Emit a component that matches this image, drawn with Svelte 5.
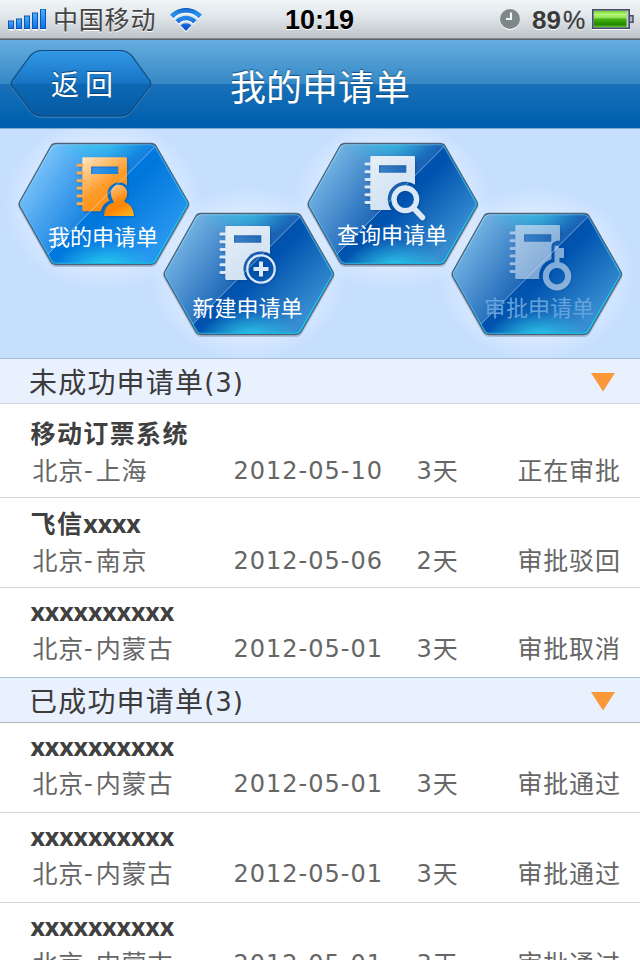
<script>
  const tabs = [
    { label: '我的申请单', kind: 'person', tx: 30, ty: 103, bx: 64.3, by: 15.3, active: true },
    { label: '新建申请单', kind: 'plus', tx: 29.5, ty: 104, bx: 62.3, by: 14 },
    { label: '查询申请单', kind: 'search', tx: 30, ty: 101, bx: 63.3, by: 14 },
    { label: '审批申请单', kind: 'key', tx: 33, ty: 104, bx: 64.3, by: 13, dim: true }
  ];
  const rings = [8, 15.7, 23.4, 31, 38.7, 46.4];

  const groups = [
    {
      title: '未成功申请单(3)',
      rows: [
        { name: '移动订票系统', route: '北京-上海', date: '2012-05-10', days: '3天', state: '正在审批' },
        { name: '飞信xxxx', route: '北京-南京', date: '2012-05-06', days: '2天', state: '审批驳回' },
        { name: 'xxxxxxxxxx', route: '北京-内蒙古', date: '2012-05-01', days: '3天', state: '审批取消' }
      ]
    },
    {
      title: '已成功申请单(3)',
      rows: [1, 2, 3].map(() => ({
        name: 'xxxxxxxxxx', route: '北京-内蒙古', date: '2012-05-01', days: '3天', state: '审批通过'
      }))
    }
  ];

  // Latin and Chinese runs are tracked differently
  const runs = (s) => s.match(/[\x20-\x7e]+|[^\x20-\x7e]+/g);
  const isLatin = (s) => /^[\x20-\x7e]/.test(s);
  const hex = 'M38 1.5H133Q136.5 1.5 138.3 4.5L169.8 59.5Q171.2 62 169.8 64.5L138.3 119.5Q136.5 122.5 133 122.5H38Q34.5 122.5 32.7 119.5L1.8 64.5Q.5 62 1.8 59.5L32.7 4.5Q34.5 1.5 38 1.5Z';
  const waves = 'M1 7.8C9.5-1.4 24.5-1.4 33 7.8L29.6 11.2C23 4 11 4 4.4 11.2ZM6.5 13.3C12 7.2 22 7.2 27.5 13.3L24.2 16.6C20.5 12.2 13.5 12.2 9.8 16.6ZM11.7 18.5C14.5 15.5 19.5 15.5 22.3 18.5L17 24Z';
</script>

{#snippet mixed(text)}{#each runs(text) as r}<span class={isLatin(r) ? 'lat' : 'han'}>{r}</span>{/each}{/snippet}

<div class="screen">
  <div class="status">
    <svg class="signal" width="40" height="22" viewBox="0 0 40 22">
      <defs><linearGradient id="sig" x1="0" y1="0" x2="0" y2="1"><stop offset="0" stop-color="#46b4fb" /><stop offset="1" stop-color="#0670ef" /></linearGradient></defs>
      {#each [8, 10, 13, 16, 20] as h, i}
        <rect x={i * 8 + 0.5} y={21 - h} width="5.2" height={h - 0.5} fill="#fff" transform="translate(0 1)" />
        <rect x={i * 8 + 0.5} y={20 - h} width="5" height={h - 0.5} fill="url(#sig)" stroke="#1554ad" stroke-width="1" />
      {/each}
    </svg>
    <span class="carrier">中国移动</span>
    <svg class="wifi" width="34" height="25" viewBox="0 0 34 25">
      <defs><linearGradient id="wf" x1="0" y1="0" x2="0" y2="1"><stop offset="0" stop-color="#1264c8" /><stop offset=".3" stop-color="#2b93ee" /><stop offset="1" stop-color="#0647c8" /></linearGradient></defs>
      <path fill="#fff" d={waves} transform="translate(0 1.3)" />
      <path fill="url(#wf)" d={waves} />
    </svg>
    <span class="time">10:19</span>
    <svg class="clock" width="22" height="23" viewBox="0 0 22 23">
      <circle cx="11" cy="12" r="10" fill="#fff" /><circle cx="11" cy="11" r="10" fill="#7b8886" /><path d="M12 4.500V11H7" fill="none" stroke="#f3f6f6" stroke-width="2.200" />
    </svg>
    <span class="pct">89<i>%</i></span>
    <svg class="battery" width="43" height="23" viewBox="0 0 43 23">
      <defs><linearGradient id="bat" x1="0" y1="0" x2="0" y2="1"><stop offset="0" stop-color="#6fd52d" /><stop offset=".2" stop-color="#b5f576" /><stop offset=".43" stop-color="#90df55" /><stop offset=".5" stop-color="#45b60d" /><stop offset=".85" stop-color="#218800" /><stop offset="1" stop-color="#55c427" /></linearGradient></defs>
      <rect y="2" width="38" height="19" fill="#fff" />
      <rect x=".8" y=".8" width="36.400" height="18.400" fill="#c3cbd0" stroke="#464c66" stroke-width="1.600" />
      <rect x="2" y="2" width="32.500" height="16" fill="url(#bat)" />
      <path d="M38 6.700h3v6.600h-3" fill="#aeb8c4" stroke="#464c66" stroke-width="1.500" />
    </svg>
  </div>

  <header>
    <button class="back">
      <svg width="142" height="70" viewBox="0 0 142 70">
        <defs><linearGradient id="bk" x1="0" y1="0" x2="0" y2="1"><stop offset="0" stop-color="#3398e8" /><stop offset=".5" stop-color="#1775c3" /><stop offset=".51" stop-color="#0d68b3" /><stop offset="1" stop-color="#065aa2" /></linearGradient></defs>
        <path d="M32 1.500H110Q117 1.500 121.500 6.500L139.500 31Q142 34.500 139.500 38L121.500 61.500Q117 67 110 67H32Q25 67 20.500 61.500L2.500 38Q0 34.500 2.500 31L20.500 6.500Q25 1.500 32 1.500Z" fill="none" stroke="#7bb9e4" stroke-opacity=".5" transform="translate(0 1.200)" />
        <path d="M32 1.500H110Q117 1.500 121.500 6.500L139.500 31Q142 34.500 139.500 38L121.500 61.500Q117 67 110 67H32Q25 67 20.500 61.500L2.500 38Q0 34.500 2.500 31L20.500 6.500Q25 1.500 32 1.500Z" fill="url(#bk)" stroke="#124a7b" stroke-width="1.200" />
      </svg>
      <span>返回</span>
    </button>
    <h1>我的申请单</h1>
  </header>

  <nav>
    {#each tabs as t, i}
      <svg class="hex" width="172" height="128" viewBox="0 0 172 128">
        <defs>
          <linearGradient id="base{i}" gradientUnits="userSpaceOnUse" x1="50" y1="35" x2="130" y2="115">
            <stop offset="0" stop-color={t.active ? '#0077dc' : '#004da8'} /><stop offset=".45" stop-color={t.active ? '#0077dc' : '#0053ae'} /><stop offset="1" stop-color={t.active ? '#2796ee' : '#378cd0'} />
          </linearGradient>
          <linearGradient id="gloss{i}" gradientUnits="userSpaceOnUse" x1="18" y1="22" x2="80" y2="66">
            <stop offset="0" stop-color={t.active ? '#79c3fb' : '#75b4e4'} /><stop offset="1" stop-color={t.active ? '#1380df' : '#1a63b5'} />
          </linearGradient>
          <radialGradient id="cy{i}"><stop offset="0" stop-color="#2ee6f6" stop-opacity=".75" /><stop offset="1" stop-color="#26cdf0" stop-opacity="0" /></radialGradient>
          <linearGradient id="rim{i}" x1="0" y1="0" x2=".8" y2="1"><stop offset="0" stop-color="#a9ddf9" stop-opacity=".8" /><stop offset=".5" stop-color="#43b9f4" stop-opacity=".6" /><stop offset="1" stop-color="#00d8ff" /></linearGradient>
          <linearGradient id="ico{i}" x1="0" y1="0" x2=".6" y2="1">
            <stop offset="0" stop-color={t.active ? '#ffe7c5' : '#e6eff8'} /><stop offset=".6" stop-color={t.active ? '#ff9b29' : '#d8e6f4'} /><stop offset="1" stop-color={t.active ? '#ff8d0c' : '#cfe0f2'} />
          </linearGradient>
          <linearGradient id="man{i}" gradientUnits="userSpaceOnUse" x1="95" y1="43" x2="112" y2="78"><stop offset="0" stop-color="#ffc780" /><stop offset=".45" stop-color="#ff8707" /><stop offset=".6" stop-color="#ff8707" /><stop offset="1" stop-color="#ffc12a" /></linearGradient>
          <clipPath id="clip{i}"><path d={hex} /></clipPath>
          <mask id="cut{i}">
            <rect width="172" height="124" fill="#fff" />
            {#if t.kind === 'person'}
              <circle cx="101" cy="52" r="11.500" /><path d="M82.500 72C83 62 91 57 101 57L120 60V76H82Z" />
            {:else if t.kind === 'plus'}<circle cx="98" cy="57" r="17.500" />
            {:else if t.kind === 'search'}<circle cx="98.300" cy="57.300" r="17.500" />
            {:else}<circle cx="106" cy="64.300" r="18" /><path d="M100.500 52V34Q101 28.500 110 28.500V52Z" />{/if}
          </mask>
        </defs>
        <path d={hex} fill="none" stroke="#8091a9" stroke-width="2" opacity=".45" transform="translate(0 1.500)" />
        <g clip-path="url(#clip{i})">
          <rect width="172" height="124" fill="url(#base{i})" />
          <path d="M0 0H141.500L18 124H0Z" fill="url(#gloss{i})" />
          <ellipse cx="85" cy="0" rx="50" ry="25" fill="url(#cy{i})" opacity=".75" />
          <ellipse cx="87" cy="124" rx="52" ry="25" fill="url(#cy{i})" />
          <path d={hex} fill="none" stroke="url(#rim{i})" stroke-width="3.600" />
        </g>
        <path d={hex} fill="none" stroke="#4c6277" stroke-width="1.300" />

        <g class="icon" opacity={t.dim ? 0.6 : 1}>
          <g mask="url(#cut{i})">
            <g transform="translate({t.bx} {t.by})">
              <path fill="url(#ico{i})" fill-rule="evenodd" d="M1 0H43.500Q44.700 0 44.700 1.200V54H1Q0 54 0 53V1Q0 0 1 0ZM8.700 9.300V16.700H36V9.300Z" />
              {#each rings as y}<rect x="-5.800" y={y - 1.5} width="7" height="3" rx="1.300" fill={t.active ? '#ffab4d' : '#dce9f5'} />{/each}
            </g>
          </g>
          {#if t.kind === 'person'}
            <path d="M95.500 59.500Q92.700 54 92.800 51A8.200 8.200 0 0 1 109.200 51Q109.500 55 106.500 58.500V60Q115 62.500 116 74H86Q86.500 62.500 96 60.500Z" fill="url(#man{i})" />
          {:else if t.kind === 'plus'}
            <circle cx="98" cy="57" r="13.700" fill="none" stroke="#dbe9f7" stroke-width="2.300" /><path d="M98 49.500V64.500M90.500 57H105.500" stroke="#dce9f6" stroke-width="4" />
          {:else if t.kind === 'search'}
            <circle cx="98.300" cy="57.300" r="11.300" fill="none" stroke="#dbe8f5" stroke-width="5.400" /><path d="M107 66.500L115.500 75.500" stroke="#dbe8f5" stroke-width="5.500" stroke-linecap="round" />
          {:else}
            <circle cx="106" cy="64.300" r="11.200" fill="none" stroke="#d7e6f4" stroke-width="6" /><path d="M103.500 51V35Q104 33.600 105.500 33.600Q108 33.600 108 36H113V46H108.500V51Z" fill="#d7e6f4" />
          {/if}
        </g>
        <path d="M136.500 5L30 112" stroke="#d8efff" stroke-opacity=".5" fill="none" />
        <text x={t.tx} y={t.ty} fill={t.dim ? '#65a3dc' : '#fff'}>{t.label}</text>
      </svg>
    {/each}
  </nav>

  <main>
    {#each groups as g}
      <section>
        <h2><span>{@render mixed(g.title)}</span><svg width="24" height="19" viewBox="0 0 24 19"><path d="M0 0H24L12 18.500Z" fill="#f99739" /></svg></h2>
        {#each g.rows as r}
          <article>
            <h3>{@render mixed(r.name)}</h3>
            <div class="meta">
              <span class="route">{@render mixed(r.route)}</span>
              <span class="date">{@render mixed(r.date)}</span>
              <span class="days">{@render mixed(r.days)}</span>
              <span class="state">{@render mixed(r.state)}</span>
            </div>
          </article>
        {/each}
      </section>
    {/each}
  </main>
</div>

<style>
  :global(body) { margin: 0; overflow: hidden; }
  * { box-sizing: border-box; }
  .screen { width: 640px; height: 960px; overflow: hidden; background: #fff; font-family: "Noto Sans", "Noto Sans CJK SC", sans-serif; display: flex; flex-direction: column; }
  .status { height: 40px; flex: none; display: flex; align-items: flex-start; background: linear-gradient(#f0f5f8, #e4e9ed 35%, #bec5ca 38px, #84898c 38px, #84898c 39px, #58656d 39px); color: #444; }
  .signal { margin: 9px 0 0 8px; }
  .carrier { font: 25px/36px "Noto Sans CJK SC", sans-serif; letter-spacing: .8px; width: 109px; margin: 0 0 0 5px; text-shadow: 0 1px #fff; white-space: nowrap; }
  .wifi { margin: 7px 0 0 7px; }
  .time { margin-left: 82px; width: 72px; font: bold 27px/40px "Liberation Sans", sans-serif; color: #000; text-shadow: 0 1px #fff; }
  .clock { margin: 8px 0 0 142px; }
  .pct { margin-left: 11px; width: 56px; font: bold 26px/40px "Liberation Sans", sans-serif; color: #3b3b3b; text-shadow: 0 1px #fff; white-space: nowrap; }
  .pct i { font-style: normal; font-weight: 400; font-size: 25px; margin-left: 2px; -webkit-text-stroke: .3px #3b3b3b; }
  .battery { margin: 9px 0 0 4px; flex: none; }

  header { height: 89px; flex: none; display: flex; background: linear-gradient(#66addf, #3588c5 44px, #1970b7 44px, #0061b0 82px, #0060b0 88px, #7ea9d0 88px); }
  .back { width: 142px; height: 70px; margin: 9px 0 0 10px; padding: 0; border: 0; background: none; display: grid; }
  .back > * { grid-area: 1 / 1; }
  .back span { font: 28px/68px "Noto Sans CJK SC", sans-serif; letter-spacing: 6px; color: #fff; text-align: left; padding-left: 41px; text-shadow: 0 -1px 1px #0c4277; }
  h1 { margin: 0 0 0 78px; font: 36px/90px "Noto Sans CJK SC", sans-serif; color: #fff; text-shadow: 0 -1px 1px #174e7f; }

  nav { height: 229px; flex: none; display: flex; align-items: flex-start; padding: 13px 0 0 18px; background:
    radial-gradient(ellipse 100px 88px at 103px 75px, #e2eeff 55%, transparent), radial-gradient(ellipse 100px 88px at 248px 145px, #e2eeff 55%, transparent),
    radial-gradient(ellipse 100px 88px at 392px 75px, #e2eeff 55%, transparent), radial-gradient(ellipse 100px 88px at 536px 145px, #e2eeff 55%, transparent), #c6dfff; }
  .hex { flex: none; margin-right: -28px; }
  .hex:first-child { margin-right: -27px; }
  .hex:nth-child(even) { margin-top: 70px; }
  .hex text { font: 22px "Noto Sans CJK SC", sans-serif; }
  .icon { filter: drop-shadow(1px 1px 1px rgba(0, 50, 120, .35)); }

  h2 { margin: 0; height: 46px; padding: 0 25px 0 29px; display: flex; align-items: center; justify-content: space-between; background: #e9f1ff; border-top: 1px solid #a9bfd9; border-bottom: 1px solid #d0d3d9; font-size: 28px; line-height: 44px; font-weight: 400; color: #3b3b3b; }
  h2 > span { padding-top: 1px; }
  h2 .han { letter-spacing: 1.2px; }
  h2 .lat { font-family: "DejaVu Sans", sans-serif; font-size: 26px; letter-spacing: .9px; line-height: 1; position: relative; top: -1px; }
  h2 svg { margin-top: 2px; }
  article { height: 90px; border-bottom: 1px solid #d6d6d6; padding-top: 6px; color: #666; }
  section:first-child article:nth-of-type(1) { height: 94px; padding-top: 12px; }
  section:first-child article:nth-of-type(2) { padding-top: 8px; }
  section:first-child article:nth-of-type(3) { height: 89px; padding-top: 6px; border: 0; }
  section:nth-child(2) h2 { border-bottom-color: #b1b6bd; }
  h3 { margin: 0; padding-left: 30.5px; height: 36px; font-size: 25px; line-height: 35px; font-weight: 700; color: #404040; }
  h3 .han { letter-spacing: 1.4px; }
  h3 .lat { letter-spacing: -.1px; }
  .meta { display: grid; grid-template-columns: 201px 183px 101px auto; padding-left: 32.5px; height: 36px; font-size: 25px; line-height: 36px; white-space: nowrap; }
  .meta .han { letter-spacing: .8px; }
  .meta .lat { font-family: "DejaVu Sans", sans-serif; font-size: 24px; letter-spacing: 1px; line-height: 1; position: relative; top: -1px; }
  .meta .route .lat { margin: 0 2px 0 0; }
</style>
